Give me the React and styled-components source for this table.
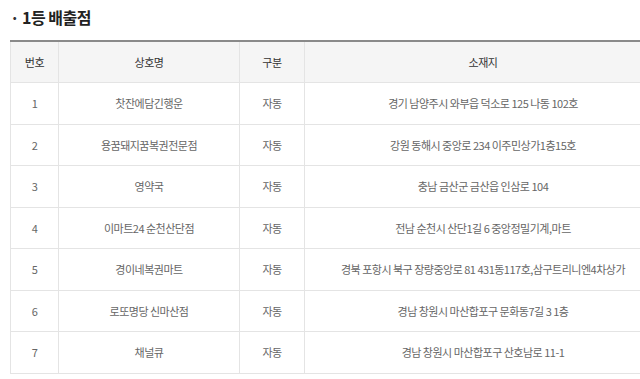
import React from 'react';
import styled, { createGlobalStyle } from 'styled-components';

const GlobalStyle = createGlobalStyle`
  html, body {
    margin: 0;
    padding: 0;
    background: #fff;
    overflow: hidden;
  }
  body {
    font-family: "Noto Sans CJK KR", "Noto Sans", sans-serif;
  }
`;

const Section = styled.section`
  width: 640px;
  height: 379px;
  padding: 4px 0 0 10px;
  box-sizing: border-box;
  overflow: hidden;
`;

const Title = styled.h3`
  display: flex;
  align-items: center;
  gap: 3px;
  margin: 0;
  height: 26px;
  font-size: 16px;
  font-weight: 700;
  color: #222;
  letter-spacing: -0.5px;
`;

const Dot = styled.span`
  font-weight: 700;
  color: #333;
`;

const Table = styled.table`
  margin-top: 10px;
  width: 652px;
  border-collapse: collapse;
  table-layout: fixed;
  border-top: 2px solid #8a8a8a;
  font-size: 11px;
`;

const Th = styled.th`
  height: 40px;
  padding: 0;
  background: #f5f5f5;
  color: #333;
  font-weight: 400;
  text-align: center;
  letter-spacing: -0.4px;
  border: 1px solid #e4e4e4;
  border-top: none;
`;

const Td = styled.td`
  height: 40.5px;
  padding: 0;
  color: #666;
  font-weight: 400;
  text-align: center;
  white-space: nowrap;
  letter-spacing: -0.5px;
  border: 1px solid #e4e4e4;
`;

const stores = [
  ['찻잔에담긴행운', '자동', '경기 남양주시 와부읍 덕소로 125 나동 102호'],
  ['용꿈돼지꿈복권전문점', '자동', '강원 동해시 중앙로 234 이주민상가1층15호'],
  ['영약국', '자동', '충남 금산군 금산읍 인삼로 104'],
  ['이마트24 순천산단점', '자동', '전남 순천시 산단1길 6 중앙정밀기계,마트'],
  ['경이네복권마트', '자동', '경북 포항시 북구 장량중앙로 81 431동117호,삼구트리니엔4차상가'],
  ['로또명당 신마산점', '자동', '경남 창원시 마산합포구 문화동7길 3 1층'],
  ['채널큐', '자동', '경남 창원시 마산합포구 산호남로 11-1'],
];

export default function App() {
  return (
    <>
      <GlobalStyle />
      <Section>
        <Title>
          <Dot>·</Dot>
          <span>1등 배출점</span>
        </Title>
        <Table>
          <colgroup>
            <col style={{ width: 48 }} />
            <col style={{ width: 181 }} />
            <col style={{ width: 65 }} />
            <col />
          </colgroup>
          <thead>
            <tr>
              <Th>번호</Th>
              <Th>상호명</Th>
              <Th>구분</Th>
              <Th>소재지</Th>
            </tr>
          </thead>
          <tbody>
            {stores.map(([name, type, addr], i) => (
              <tr key={i}>
                <Td>{i + 1}</Td>
                <Td>{name}</Td>
                <Td>{type}</Td>
                <Td>{addr}</Td>
              </tr>
            ))}
          </tbody>
        </Table>
      </Section>
    </>
  );
}
